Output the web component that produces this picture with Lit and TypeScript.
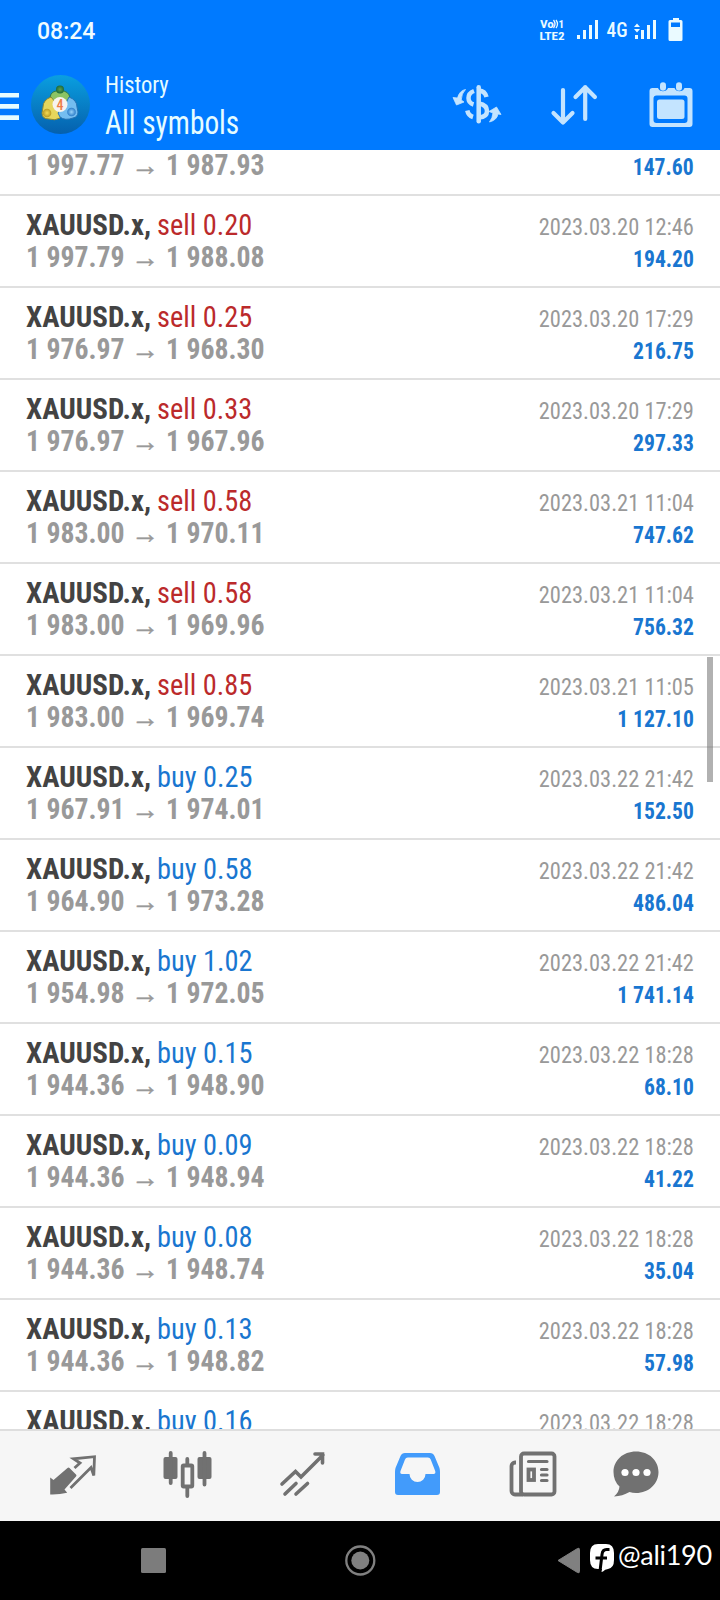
import { LitElement, html, css, svg } from "lit";
import { customElement } from "lit/decorators.js";

type Deal = [side: string, lots: string, open: string, close: string, time: string, profit: string];

const DEALS: Deal[] = [
  ["sell", "0.15", "1 997.77", "1 987.93", "2023.03.20 12:46", "147.60"],
  ["sell", "0.20", "1 997.79", "1 988.08", "2023.03.20 12:46", "194.20"],
  ["sell", "0.25", "1 976.97", "1 968.30", "2023.03.20 17:29", "216.75"],
  ["sell", "0.33", "1 976.97", "1 967.96", "2023.03.20 17:29", "297.33"],
  ["sell", "0.58", "1 983.00", "1 970.11", "2023.03.21 11:04", "747.62"],
  ["sell", "0.58", "1 983.00", "1 969.96", "2023.03.21 11:04", "756.32"],
  ["sell", "0.85", "1 983.00", "1 969.74", "2023.03.21 11:05", "1 127.10"],
  ["buy", "0.25", "1 967.91", "1 974.01", "2023.03.22 21:42", "152.50"],
  ["buy", "0.58", "1 964.90", "1 973.28", "2023.03.22 21:42", "486.04"],
  ["buy", "1.02", "1 954.98", "1 972.05", "2023.03.22 21:42", "1 741.14"],
  ["buy", "0.15", "1 944.36", "1 948.90", "2023.03.22 18:28", "68.10"],
  ["buy", "0.09", "1 944.36", "1 948.94", "2023.03.22 18:28", "41.22"],
  ["buy", "0.08", "1 944.36", "1 948.74", "2023.03.22 18:28", "35.04"],
  ["buy", "0.13", "1 944.36", "1 948.82", "2023.03.22 18:28", "57.98"],
  ["buy", "0.16", "", "", "2023.03.22 18:28", ""],
];

const icon = (x: number, y: number, w: number, h: number, body: unknown) => html`
  <svg width=${w} height=${h} viewBox="${x} ${y} ${w} ${h}">${body}</svg>`;

@customElement("app-root")
export class AppRoot extends LitElement {
  static styles = css`
    :host {
      display: flex;
      flex-direction: column;
      width: 720px;
      height: 1600px;
      overflow: hidden;
      background: #fff;
      font-family: "Roboto Condensed", Roboto, sans-serif;
      font-stretch: 75%;
    }
    svg { display: block; flex: none; }
    .status {
      flex: none;
      display: flex;
      align-items: center;
      height: 60px;
      padding-left: 37px;
      background: #007aff;
      color: #f0fbff;
    }
    .clock {
      flex: 1;
      font: 500 23px/28px Roboto, sans-serif;
      padding-top: 3px;
    }
    .bar {
      flex: none;
      display: flex;
      height: 90px;
      background: #007aff;
      color: #e6fcff;
    }
    .title { flex: 1; padding: 11px 0 0 14px; white-space: nowrap; }
    .small { font-size: 24px; line-height: 28px; transform: scaleX(0.94); transform-origin: 0 0; }
    .big { font-size: 33px; line-height: 38px; margin-top: 5px; transform: scaleX(0.89); transform-origin: 0 0; }
    .list {
      flex: 1;
      min-height: 0;
      overflow: hidden;
      position: relative;
    }
    .rows { margin-top: -46px; }
    .row {
      display: flex;
      justify-content: space-between;
      box-sizing: border-box;
      height: 92px;
      padding: 12px 26px 0;
      border-bottom: 2px solid #e0e0e0;
      white-space: nowrap;
    }
    .line { display: flex; height: 32px; line-height: 34px; font-size: 30px; }
    .sym, .side, .num { transform-origin: 0 0; }
    .sym { width: 130.5px; font-weight: 700; color: #434343; transform: scaleX(0.965); }
    .side { transform: scaleX(0.945); }
    .sell { color: #bb2a2b; }
    .buy { color: #1976d0; }
    .price { color: #999; }
    .num { width: 98px; font-weight: 700; transform: scaleX(0.925); }
    .arrow {
      font: 400 28px/36px "Liberation Sans", sans-serif;
      -webkit-text-stroke: 0.5px #999;
      width: 42px;
      display: flex;
      justify-content: center;
    }
    .right { text-align: right; }
    .time, .profit { height: 32px; line-height: 38px; font-size: 24px; transform-origin: 100% 0; }
    .time { color: #999; transform: scaleX(0.935); }
    .profit { font-weight: 700; color: #1976d0; transform: scaleX(0.9); }
    .thumb {
      position: absolute;
      right: 7px;
      top: 507px;
      width: 6px;
      height: 125px;
      background: rgba(100, 100, 100, 0.5);
    }
    .tabs {
      flex: none;
      box-sizing: border-box;
      height: 92px;
      border-top: 2px solid #dedede;
      background: #f6f6f6;
    }
    .nav {
      flex: none;
      display: flex;
      height: 79px;
      background: #000;
      color: #fff;
    }
    .handle { font: 400 27px/32px Lato, sans-serif; letter-spacing: -0.3px; padding-top: 18px; }
  `;

  private statusIcons() {
    return icon(536, 0, 184, 60, svg`
      <g fill="#eafaff" font-family="Roboto">
        <text x="540" y="28" font-size="11" font-weight="700" textLength="14" lengthAdjust="spacingAndGlyphs">Vo</text>
        <path d="M553.500 20q3 4 0 8M556 20q3 4 0 8" fill="none" stroke="#eafaff" stroke-width="1.300"/>
        <text x="558.500" y="28" font-size="11" font-weight="700">1</text>
        <text x="539.500" y="39.500" font-size="11.500" font-weight="700" textLength="25" lengthAdjust="spacingAndGlyphs">LTE2</text>
        <path d="M577 35h3v4h-3zM583 30h3v9h-3zM589 25h3v14h-3zM595 20h3v19h-3z"/>
        <text x="606.500" y="37" font-size="21" font-weight="500" textLength="21" lengthAdjust="spacingAndGlyphs">4G</text>
        <path d="M635 35h3v4h-3zM641 30h3v9h-3zM647 25h3v14h-3zM653 20h3v19h-3zM634 27l3-3.500 3 3.500zM634 29l3 3.500 3-3.500z"/>
        <path fill-rule="evenodd" d="M673 18h6v2h2a1.500 1.500 0 0 1 1.500 1.500v18a1.500 1.500 0 0 1-1.500 1.500h-11a1.500 1.500 0 0 1-1.500-1.500v-18a1.500 1.500 0 0 1 1.500-1.500h3zM671 22.500v4.500h9v-4.500z"/>
      </g>`);
  }

  private logo() {
    return icon(0, 60, 91, 90, svg`
      <defs>
        <linearGradient id="disc" x1="0" y1="0" x2="0" y2="1"><stop offset="0" stop-color="#0a9fe0"/><stop offset="1" stop-color="#0560ad"/></linearGradient>
        <radialGradient id="green"><stop offset="0" stop-color="#5fa04c"/><stop offset="1" stop-color="#1d6b3c"/></radialGradient>
        <radialGradient id="gold"><stop offset="0" stop-color="#f5dc55"/><stop offset="1" stop-color="#b99a23"/></radialGradient>
        <radialGradient id="sky"><stop offset="0" stop-color="#9ad4fa"/><stop offset="1" stop-color="#2b7cc9"/></radialGradient>
      </defs>
      <path d="M0 93h19v4.500H0zM0 104h19v4.800H0zM0 115.200h19v4.800H0z" fill="#e6fcff"/>
      <circle cx="60.500" cy="104.500" r="29.500" fill="url(#disc)"/>
      <g stroke-width="1" stroke-linejoin="round">
        <path d="M50 102q-1-10 6-11 4-2 8 0 7 2 6 11l-5 3h-10z" fill="#8cc464" stroke="#2e7a48"/>
        <path d="M51 97q-8 3-8 10l-1 6q0 6 7 6 6 2 11-1l2-5-6-10z" fill="#e6d65c" stroke="#8a8736"/>
        <path d="M69 97q8 3 8 10l1 5q0 5-5 6-8 3-13-1l-2-4 8-10z" fill="#74bdf0" stroke="#2672b5"/>
      </g>
      <circle cx="60" cy="89.500" r="4" fill="url(#green)"/>
      <circle cx="47" cy="113" r="4.300" fill="url(#gold)"/>
      <circle cx="71.500" cy="112" r="4.300" fill="url(#sky)"/>
      <circle cx="60" cy="104.500" r="7.500" fill="#f7f3ee"/>
      <text x="60" y="109.500" font-family="Roboto" font-size="14" font-weight="500" fill="#ee7d45" text-anchor="middle">4</text>`);
  }

  private actions() {
    return icon(440, 60, 280, 90, svg`
      <g fill="none" stroke="#c4e4ff" stroke-width="4.200" stroke-linecap="round" stroke-linejoin="round">
        <path d="M478.700 87.300v34" stroke-width="4.500"/>
        <path d="M479 90.500q6 .5 7.500 6.500M474 91q-5.500 2-5.500 7t5 6.500M479 103.500q8 1.500 8 7.500t-8 6.500M467.300 110.500q1 5 5.700 6.500" stroke-linecap="butt" stroke-width="4.500"/>
        <path d="M563 90v32M553.500 113l9.500 9.500 9.500-9.500M585.200 119V87M575.500 97l9.700-9.700 9.700 9.700"/>
      </g>
      <g fill="#c4e4ff" stroke="#c4e4ff" stroke-width="0.800" stroke-linejoin="round">
        <path d="M465.500 89.500q-6 1-8 8.500l-4.500-.5 3.500 7.500 7.500-3-2.800-2q.3-6.500 4.300-10.500z"/>
        <path d="M489.500 122q7.500-2 8.500-8l3 .5-4.500-7.500-7.500 4.500 4 1.500q-.5 5-3.500 9z"/>
      </g>
      <g fill="#c4e4ff">
        <path fill-rule="evenodd" d="M652.500 88h5.500a5.500 5.500 0 0 0 10 0h6.500a5.500 5.500 0 0 0 10 0h5a3 3 0 0 1 3 3v33a3 3 0 0 1-3 3h-37a3 3 0 0 1-3-3v-33a3 3 0 0 1 3-3zM656.500 95.500a3 3 0 0 0-3 3v21.500a3 3 0 0 0 3 3h28a3 3 0 0 0 3-3v-21.500a3 3 0 0 0-3-3z"/>
        <rect x="657" y="99.500" width="27.500" height="19.500" rx="2.500"/>
        <rect x="660" y="82.300" width="6" height="8.500" rx="3"/><rect x="676" y="82.300" width="6" height="8.500" rx="3"/>
      </g>`);
  }

  private tabIcons() {
    return icon(0, 1431, 720, 90, svg`
      <g fill="#717171">
        <path d="M50.200 1477.500l3.300 2.500 14-12q1-1 2 0l6.500 6.500q1 1 0 2l-11.500 13 2.700 3.300q-8 2-17 1.700z"/>
        <path d="M70.500 1488l20.500-20.500 2.800 8 .7-18.800-21 2.100 6.500 4.200-5.500 5" fill="none" stroke="#717171" stroke-width="2.800"/>
        <rect x="163.500" y="1457" width="14" height="22" rx="2"/><rect x="197.500" y="1457" width="14" height="22" rx="2"/>
        <path d="M170.700 1453v30M204.500 1453v31.500M187.300 1459v6M187.300 1488v8" stroke="#717171" stroke-width="3.800" stroke-linecap="round"/>
        <rect x="182.700" y="1465.500" width="9.600" height="21" rx="1" fill="none" stroke="#717171" stroke-width="3.800"/>
        <path d="M282 1484l13.500-12.500 5.500 5.500 22-22M315 1454h7.500v9M285 1494l11-10.500M296 1494l11.500-10.500" fill="none" stroke="#717171" stroke-width="3.600" stroke-linecap="round" stroke-linejoin="miter"/>
        <path fill="#429bfb" fill-rule="evenodd" d="M405 1453h25a5 5 0 0 1 4.500 3l5 12q.5 2 .5 4v20a3 3 0 0 1-3 3h-39a3 3 0 0 1-3-3v-20q0-2 .5-4l5-12a5 5 0 0 1 5-3zM408 1457.500a3 3 0 0 0-3 2l-4.500 11.500q-.8 3 1.500 3h7.500a8 8 0 0 0 16 0h8q2.500 0 1.700-3l-4.500-11.500a3 3 0 0 0-3-2z"/>
        <g fill="none" stroke="#717171" stroke-width="3.800">
          <rect x="521" y="1453.500" width="33.500" height="41" rx="3"/>
          <path d="M516 1462.500h-1a3.500 3.500 0 0 0-3.500 3.500v25a3.500 3.500 0 0 0 3.500 3.500h8"/>
          <rect x="528.500" y="1469.500" width="5.500" height="10.500"/>
          <path d="M528.500 1461.500h18.500M541.500 1469.500h5.500M541.500 1475h5.500M541.500 1480.500h5.500" stroke-linecap="round" stroke-width="3.200"/>
        </g>
        <path d="M636 1451.500c13 0 22.500 9 22.500 20.500s-9.500 21-22.500 21q-3.500 0-6.500-1-7 4-15.500 4.500 5-4 5.500-10-6-5.500-6-14.500c0-11.500 9.500-20.500 22.500-20.500z"/>
        <g fill="#fff"><circle cx="625" cy="1472.500" r="3.600"/><circle cx="636" cy="1472.500" r="3.600"/><circle cx="647" cy="1472.500" r="3.600"/></g>
      </g>`);
  }

  private navIcons() {
    return icon(0, 1521, 618, 79, svg`
      <rect x="141" y="1548" width="25" height="25" rx="1.500" fill="#7c7c7c"/>
      <circle cx="360.300" cy="1560.500" r="14" fill="none" stroke="#808080" stroke-width="2.300"/>
      <circle cx="360.300" cy="1560.500" r="9" fill="#808080"/>
      <path d="M558 1560.500l19.500-12q2-1 2 1v22q0 2-2 1z" fill="#808080" stroke="#808080" stroke-linejoin="round"/>
      <path d="M598 1544h8q8 0 8 9v7q0 8-6 9-3 0-5 2.500l-1.500.5.500-3h-4q-8 0-8-9v-7q0-9 8-9z" fill="#fff"/>
      <path d="M609.500 1549.500h-3q-4 0-4.500 5l-1.800 15M595.500 1558h11.500" fill="none" stroke="#000" stroke-width="3"/>`);
  }

  render() {
    return html`
      <div class="status"><div class="clock">08:24</div>${this.statusIcons()}</div>
      <div class="bar">
        ${this.logo()}
        <div class="title"><div class="small">History</div><div class="big">All symbols</div></div>
        ${this.actions()}
      </div>
      <div class="list">
        <div class="rows">
          ${DEALS.map(([side, lots, open, close, time, profit], i) => html`
            <div class="row">
              <div>
                <div class="line">${i ? html`<span class="sym">XAUUSD.x,</span><span class="side ${side}">${side} ${lots}</span>` : ""}</div>
                ${open ? html`<div class="line price"><span class="num">${open}</span><span class="arrow">→</span><span class="num">${close}</span></div>` : ""}
              </div>
              <div class="right"><div class="time">${i ? time : ""}</div><div class="profit">${profit}</div></div>
            </div>`)}
        </div>
        <div class="thumb"></div>
      </div>
      <div class="tabs">${this.tabIcons()}</div>
      <div class="nav">${this.navIcons()}<div class="handle">@ali190</div></div>`;
  }
}
